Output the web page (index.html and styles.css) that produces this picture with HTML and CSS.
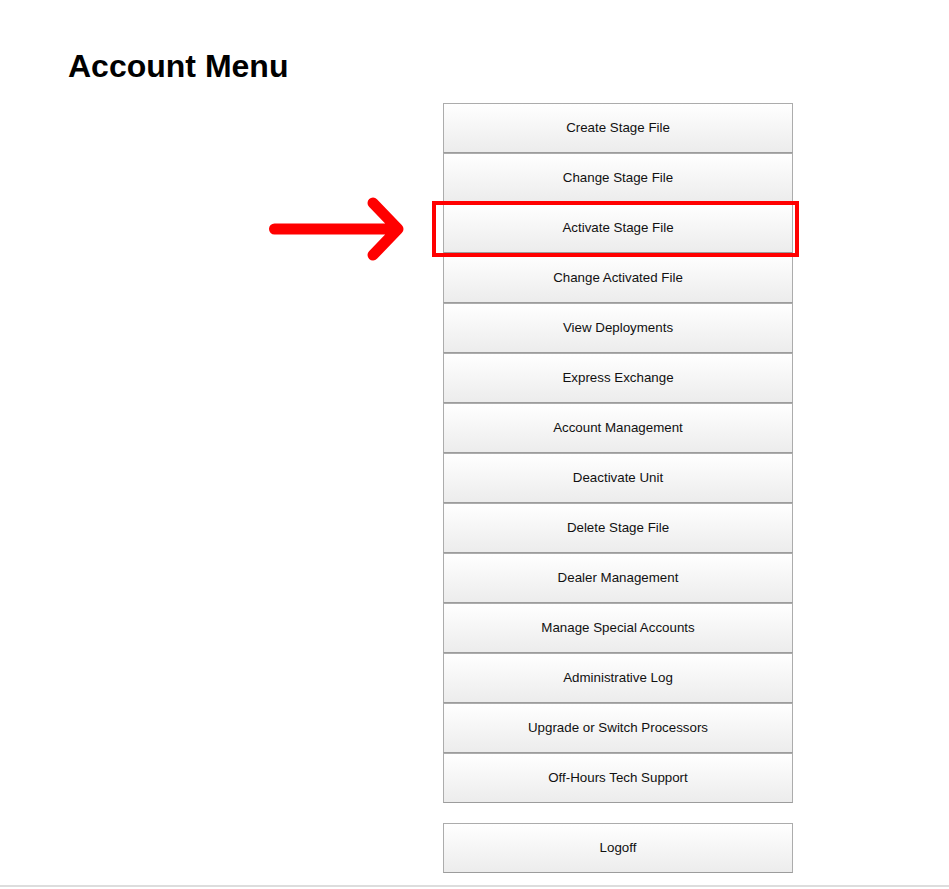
FILE: index.html
```html
<!DOCTYPE html>
<html lang="en">

<head>
    <meta charset="UTF-8">
    <meta name="viewport" content="width=device-width, initial-scale=1.0">
    <title>Account Menu</title>
    <link rel="stylesheet" href="styles.css">
</head>

<body>
    <div class="page">
        <h1 class="title">Account Menu</h1>
        <div class="menu">
            <svg class="arrow" width="145" height="70" viewBox="0 0 145 70">
                <path d="M12.5 35 H134 M111 9 L136 35 L111 61" fill="none" stroke="#ff0000" stroke-width="11"
                    stroke-linecap="round" stroke-linejoin="round" />
            </svg>
            <button class="item">Create Stage File</button>
            <button class="item">Change Stage File</button>
            <div class="marked">
                <button class="item">Activate Stage File</button>
                <span class="highlight"></span>
            </div>
            <button class="item">Change Activated File</button>
            <button class="item">View Deployments</button>
            <button class="item">Express Exchange</button>
            <button class="item">Account Management</button>
            <button class="item">Deactivate Unit</button>
            <button class="item">Delete Stage File</button>
            <button class="item">Dealer Management</button>
            <button class="item">Manage Special Accounts</button>
            <button class="item">Administrative Log</button>
            <button class="item">Upgrade or Switch Processors</button>
            <button class="item">Off-Hours Tech Support</button>
        </div>
        <div class="menu logoff">
            <button class="item">Logoff</button>
        </div>
    </div>
    <hr class="rule">
</body>

</html>
```

FILE: styles.css
```css
body {
    margin: 0;
    font-family: "Liberation Sans", Arial, sans-serif;
    background-color: #ffffff;
    color: #000000;
}
.page {
    padding: 48px 0 0 68px;
}
.title {
    margin: 0;
    font-size: 32px;
    line-height: 37px;
    font-weight: bold;
}
.menu {
    position: relative;
    display: flex;
    flex-direction: column;
    width: 350px;
    margin: 18px 0 0 375px;
}
.item {
    box-sizing: border-box;
    width: 350px;
    height: 50px;
    margin: 0;
    padding: 0 0 2px;
    border: 1px solid #acacac;
    border-bottom-color: #9c9c9c;
    border-radius: 0;
    background: linear-gradient(#ffffff, #ececec);
    font-family: "Liberation Sans", Arial, sans-serif;
    font-size: 13.33px;
    color: #111111;
    cursor: pointer;
}
.item:hover {
    background: linear-gradient(#f4f4f4, #e0e0e0);
}
.marked {
    position: relative;
    display: flex;
}
.highlight {
    position: absolute;
    left: -11px;
    top: -2px;
    width: 367px;
    height: 56px;
    box-sizing: border-box;
    border: 4px solid #ff0000;
    pointer-events: none;
}
.arrow {
    position: absolute;
    left: -181px;
    top: 91px;
}
.logoff {
    margin-top: 20px;
}
.rule {
    margin: 12px 0 0;
    border: 0;
    border-top: 2px solid #dddddd;
}
```
